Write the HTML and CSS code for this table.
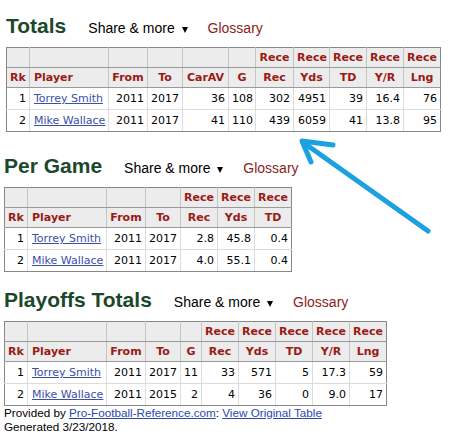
FILE: index.html
```html
<!DOCTYPE html>
<html lang="en">
<head>
    <meta charset="UTF-8">
    <meta name="viewport" content="width=device-width, initial-scale=1.0">
    <title>receiving totals</title>
    <link rel="stylesheet" href="styles.css">
</head>
<body>
<div id="page">

    <div class="block block-totals">
        <div class="block-head">
            <h2>Totals</h2>
            <span class="share">Share &amp; more <span class="caret"></span></span>
            <a href="" class="glossary">Glossary</a>
        </div>
        <table class="stats stats-totals">
            <colgroup>
                <col class="w-rk"><col class="w-player"><col class="w-from"><col class="w-to">
                <col class="w-carav"><col class="w-g"><col class="w-wide"><col class="w-narrow">
                <col class="w-stat"><col class="w-stat"><col class="w-stat">
            </colgroup>
            <thead>
                <tr class="over">
                    <th></th><th></th><th></th><th></th><th></th><th></th>
                    <th>Rece</th><th>Rece</th><th>Rece</th><th>Rece</th><th>Rece</th>
                </tr>
                <tr>
                    <th>Rk</th><th class="left">Player</th><th>From</th><th>To</th><th>CarAV</th><th>G</th>
                    <th>Rec</th><th>Yds</th><th>TD</th><th>Y/R</th><th>Lng</th>
                </tr>
            </thead>
            <tbody>
                <tr>
                    <td>1</td><td class="left"><a href="">Torrey Smith</a></td><td>2011</td><td>2017</td><td>36</td><td>108</td>
                    <td>302</td><td>4951</td><td>39</td><td>16.4</td><td>76</td>
                </tr>
                <tr>
                    <td>2</td><td class="left"><a href="">Mike Wallace</a></td><td>2011</td><td>2017</td><td>41</td><td>110</td>
                    <td>439</td><td>6059</td><td>41</td><td>13.8</td><td>95</td>
                </tr>
            </tbody>
        </table>
    </div>

    <div class="block block-pergame">
        <div class="block-head">
            <h2>Per Game</h2>
            <span class="share">Share &amp; more <span class="caret"></span></span>
            <a href="" class="glossary">Glossary</a>
        </div>
        <table class="stats stats-pergame">
            <colgroup>
                <col class="w-rk"><col class="w-player"><col class="w-from"><col class="w-to">
                <col class="w-stat"><col class="w-stat"><col class="w-stat">
            </colgroup>
            <thead>
                <tr class="over">
                    <th></th><th></th><th></th><th></th>
                    <th>Rece</th><th>Rece</th><th>Rece</th>
                </tr>
                <tr>
                    <th>Rk</th><th class="left">Player</th><th>From</th><th>To</th>
                    <th>Rec</th><th>Yds</th><th>TD</th>
                </tr>
            </thead>
            <tbody>
                <tr>
                    <td>1</td><td class="left"><a href="">Torrey Smith</a></td><td>2011</td><td>2017</td>
                    <td>2.8</td><td>45.8</td><td>0.4</td>
                </tr>
                <tr>
                    <td>2</td><td class="left"><a href="">Mike Wallace</a></td><td>2011</td><td>2017</td>
                    <td>4.0</td><td>55.1</td><td>0.4</td>
                </tr>
            </tbody>
        </table>
    </div>

    <div class="block block-playoffs">
        <div class="block-head">
            <h2>Playoffs Totals</h2>
            <span class="share">Share &amp; more <span class="caret"></span></span>
            <a href="" class="glossary">Glossary</a>
        </div>
        <table class="stats stats-playoffs">
            <colgroup>
                <col class="w-rk"><col class="w-player"><col class="w-from"><col class="w-to">
                <col class="w-g-small"><col class="w-stat"><col class="w-stat">
                <col class="w-stat"><col class="w-stat"><col class="w-stat">
            </colgroup>
            <thead>
                <tr class="over">
                    <th></th><th></th><th></th><th></th><th></th>
                    <th>Rece</th><th>Rece</th><th>Rece</th><th>Rece</th><th>Rece</th>
                </tr>
                <tr>
                    <th>Rk</th><th class="left">Player</th><th>From</th><th>To</th><th>G</th>
                    <th>Rec</th><th>Yds</th><th>TD</th><th>Y/R</th><th>Lng</th>
                </tr>
            </thead>
            <tbody>
                <tr>
                    <td>1</td><td class="left"><a href="">Torrey Smith</a></td><td>2011</td><td>2017</td><td>11</td>
                    <td>33</td><td>571</td><td>5</td><td>17.3</td><td>59</td>
                </tr>
                <tr>
                    <td>2</td><td class="left"><a href="">Mike Wallace</a></td><td>2011</td><td>2015</td><td>2</td>
                    <td>4</td><td>36</td><td>0</td><td>9.0</td><td>17</td>
                </tr>
            </tbody>
        </table>
    </div>

    <p class="credit">Provided by <a href="">Pro-Football-Reference.com</a>: <a href="">View Original Table</a><br>Generated 3/23/2018.</p>

    <!-- hand drawn arrow on top of the screenshot -->
    <svg class="arrow" width="450" height="440" viewBox="0 0 450 440">
        <g fill="none" stroke="#1ba0e2" stroke-width="5" stroke-linecap="round" stroke-linejoin="round">
            <path d="M428 231 L304 143"/>
            <path d="M333 145 L302 141 L311 162"/>
        </g>
    </svg>
</div>
</body>
</html>
```

FILE: styles.css
```css
body {
    margin: 0;
    background: #fff;
    font-family: "Liberation Sans", Arial, sans-serif;
    color: #000;
}

#page {
    position: relative;
    width: 450px;
    height: 440px;
    padding: 14px 0 0 4px;
    box-sizing: border-box;
}

.block-totals {
    margin-left: 2px;
}

.block-pergame {
    margin-top: 22px;
}

.block-playoffs {
    margin-top: 16px;
}

.block-head {
    display: flex;
    align-items: baseline;
    height: 24px;
    line-height: 24px;
    margin-bottom: 9px;
}

.block-head h2 {
    margin: 0;
    font-size: 21px;
    font-weight: bold;
    color: #1b482b;
}

.share {
    margin-left: 22px;
    font-size: 14px;
}

/* little down arrow after "more" */
.caret {
    display: inline-block;
    width: 0;
    height: 0;
    margin-left: 3px;
    border-left: 3px solid transparent;
    border-right: 3px solid transparent;
    border-top: 6px solid #000;
}

.glossary {
    margin-left: 20px;
    font-size: 14px;
    color: #8b1d1d;
    text-decoration: none;
}

/* stats tables */
.stats {
    border-collapse: collapse;
    table-layout: fixed;
    font-family: "DejaVu Sans", Verdana, sans-serif;
    font-size: 11px;
}

.stats-totals {
    width: 434px;
}

.stats-pergame {
    width: 287px;
}

.stats-playoffs {
    width: 382px;
}

.w-rk { width: 23px; }
.w-player { width: 79px; }
.w-from { width: 39px; }
.w-to { width: 35px; }
.w-carav { width: 46px; }
.w-g { width: 27px; }
.w-g-small { width: 21px; }
.w-stat { width: 37px; }
.w-wide { width: 38px; }
.w-narrow { width: 36px; }

.stats th,
.stats td {
    padding: 0 3px;
    white-space: nowrap;
    overflow: hidden;
}

.stats th {
    height: 19px;
    line-height: 19px;
    background: #ececec;
    color: #9a1a14;
    font-weight: bold;
    text-align: center;
    border: 1px solid #c4c4c4;
    border-bottom-color: #999;
}

.stats td {
    height: 21px;
    line-height: 21px;
    text-align: right;
    border: 1px solid #dcdcdc;
}

.stats th.left,
.stats td.left {
    text-align: left;
    padding-left: 4px;
}

.stats td a {
    color: #3b4fa8;
}

/* outer frame of each table */
.stats tr > :first-child {
    border-left-color: #888;
}

.stats tr > :last-child {
    border-right-color: #888;
}

.stats .over th {
    border-top-color: #888;
}

.stats tbody tr:last-child td {
    border-bottom-color: #888;
}

.credit {
    margin: 0;
    font-size: 11.7px;
    line-height: 14px;
}

.credit a {
    color: #2a48b0;
}

.arrow {
    position: absolute;
    left: 0;
    top: 0;
    pointer-events: none;
}
```
